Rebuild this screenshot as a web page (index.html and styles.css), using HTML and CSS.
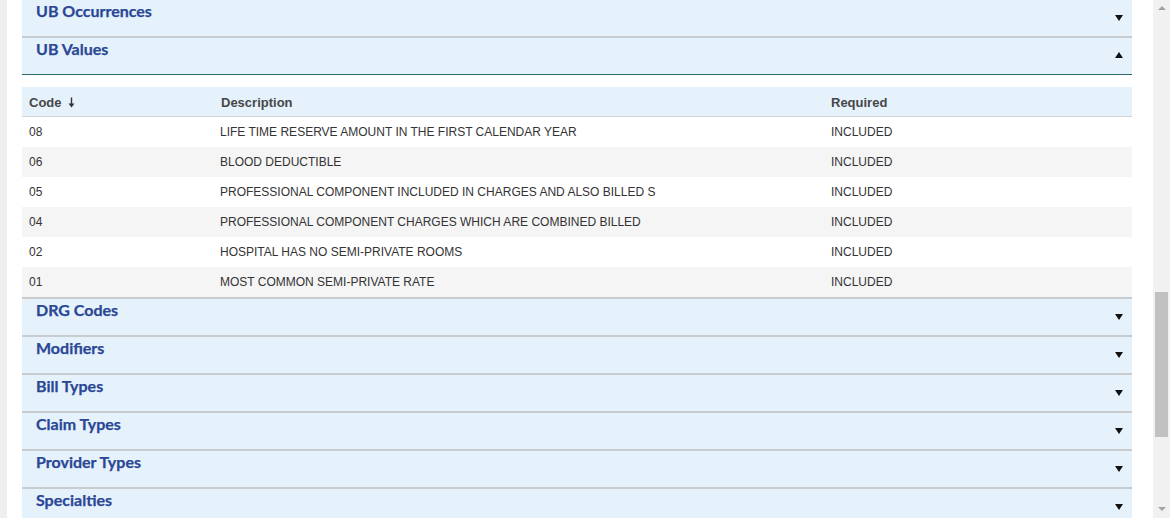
FILE: index.html
```html
<!DOCTYPE html>
<html>
<head>
<meta charset="utf-8">
<link rel="stylesheet" href="styles.css">
</head>
<body>
<div class="page">
  <div class="left-strip"></div>
  <main class="content">
    <section class="panel">
      <div class="panel-head"><span class="panel-title">UB Occurrences</span><span class="caret down"></span></div>
    </section>
    <section class="panel open">
      <div class="panel-head"><span class="panel-title">UB Values</span><span class="caret up"></span></div>
      <div class="panel-body">
        <table class="grid">
          <thead>
            <tr><th class="c-code">Code <svg class="sort" width="7" height="11" viewBox="0 0 7 11"><path d="M3.5 0.5V9" stroke="#333" stroke-width="1.4"/><path d="M0.5 6.5L3.5 10.5L6.5 6.5Z" fill="#333"/></svg></th><th class="c-desc">Description</th><th class="c-req">Required</th></tr>
          </thead>
          <tbody>
            <tr><td>08</td><td>LIFE TIME RESERVE AMOUNT IN THE FIRST CALENDAR YEAR</td><td>INCLUDED</td></tr>
            <tr><td>06</td><td>BLOOD DEDUCTIBLE</td><td>INCLUDED</td></tr>
            <tr><td>05</td><td>PROFESSIONAL COMPONENT INCLUDED IN CHARGES AND ALSO BILLED S</td><td>INCLUDED</td></tr>
            <tr><td>04</td><td>PROFESSIONAL COMPONENT CHARGES WHICH ARE COMBINED BILLED</td><td>INCLUDED</td></tr>
            <tr><td>02</td><td>HOSPITAL HAS NO SEMI-PRIVATE ROOMS</td><td>INCLUDED</td></tr>
            <tr><td>01</td><td>MOST COMMON SEMI-PRIVATE RATE</td><td>INCLUDED</td></tr>
          </tbody>
        </table>
      </div>
    </section>
    <section class="panel">
      <div class="panel-head"><span class="panel-title">DRG Codes</span><span class="caret down"></span></div>
    </section>
    <section class="panel">
      <div class="panel-head"><span class="panel-title">Modifiers</span><span class="caret down"></span></div>
    </section>
    <section class="panel">
      <div class="panel-head"><span class="panel-title">Bill Types</span><span class="caret down"></span></div>
    </section>
    <section class="panel">
      <div class="panel-head"><span class="panel-title">Claim Types</span><span class="caret down"></span></div>
    </section>
    <section class="panel">
      <div class="panel-head"><span class="panel-title">Provider Types</span><span class="caret down"></span></div>
    </section>
    <section class="panel">
      <div class="panel-head"><span class="panel-title">Specialties</span><span class="caret down"></span></div>
    </section>
  </main>
  <div class="scrollbar">
    <span class="sb-arrow sb-up"></span>
    <div class="sb-track"><div class="sb-thumb"></div></div>
    <span class="sb-arrow sb-down"></span>
  </div>
</div>
</body>
</html>
```
FILE: styles.css
```css
html, body {
  margin: 0;
  padding: 0;
  background: #ffffff;
}
.page {
  display: flex;
  width: 1170px;
  height: 518px;
  overflow: hidden;
}
.left-strip {
  width: 7px;
  flex: none;
  background: #efefef;
}
.content {
  flex: 1;
  padding: 0 21px 0 15px;
  overflow: hidden;
}
.panel {
  border-bottom: 2px solid #c9cccf;
}
.panel-head {
  height: 36px;
  box-sizing: border-box;
  background: #e5f1fb;
  display: flex;
  justify-content: space-between;
  align-items: flex-start;
  padding: 0 9px 0 14px;
}
.open .panel-head {
  border-bottom: 1px solid #2c6a6a;
  height: 37px;
}
.panel-title {
  font-family: Lato, "Open Sans", sans-serif;
  font-weight: 700;
  font-size: 16px;
  line-height: 22px;
  color: #2a4795;
  -webkit-text-stroke: 0.25px #2a4795;
}
.caret {
  width: 0;
  height: 0;
  margin-top: 15px;
  border-left: 4px solid transparent;
  border-right: 4px solid transparent;
}
.caret.down {
  border-top: 6px solid #111;
}
.caret.up {
  border-bottom: 6px solid #111;
  margin-top: 14px;
}
.panel-body {
  padding-top: 12px;
  background: #fff;
}
.grid {
  width: 100%;
  border-collapse: collapse;
  font-family: "Liberation Sans", Arial, sans-serif;
}
.grid th {
  background: #e5f1fb;
  height: 28px;
  padding: 1px 7px 0 7px;
  text-align: left;
  font-size: 13px;
  font-weight: 700;
  color: #474747;
  border-bottom: 1px solid #cfd3d6;
}
.grid th.c-code { width: 177px; }
.grid th.c-desc { width: 596px; padding-left: 8px; }
.sort {
  margin-left: 3px;
  vertical-align: -1px;
}
.grid td {
  height: 30px;
  padding: 0 7px;
  font-size: 12px;
  color: #333;
}
.grid tbody tr:nth-child(even) td { background: #f5f5f5; }
.scrollbar {
  width: 17px;
  flex: none;
  background: #f1f1f1;
  display: flex;
  flex-direction: column;
  align-items: center;
}
.sb-arrow {
  width: 0;
  height: 0;
  border-left: 4px solid transparent;
  border-right: 4px solid transparent;
}
.sb-up {
  margin-top: 6px;
  border-bottom: 4px solid #a3a3a3;
}
.sb-down {
  margin-bottom: 7px;
  border-top: 4px solid #a3a3a3;
}
.sb-track {
  flex: 1;
  align-self: stretch;
  padding: 282px 2px 0 2px;
}
.sb-thumb {
  height: 145px;
  background: #c1c1c1;
}
```
